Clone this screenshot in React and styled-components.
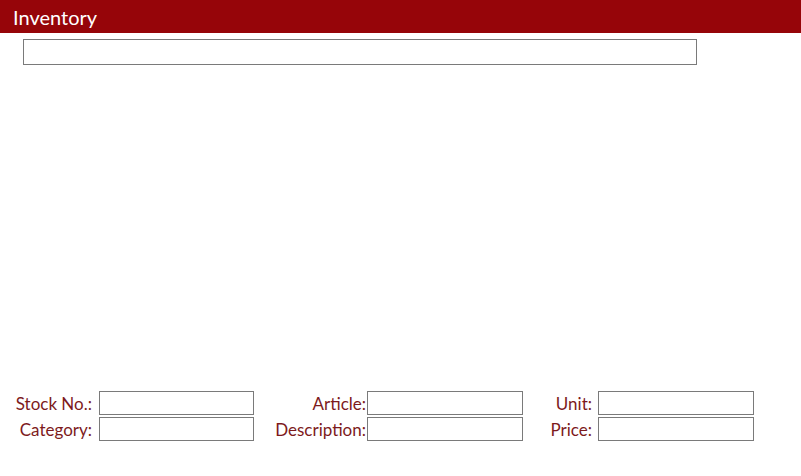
import React from "react";
import styled, { createGlobalStyle } from "styled-components";

const Global = createGlobalStyle`
  html, body { margin: 0; padding: 0; background: #ffffff; }
  body { font-family: Lato, "Open Sans", sans-serif; }
`;

const Page = styled.div`
  height: 476px;
  display: flex;
  flex-direction: column;
`;

const Header = styled.header`
  height: 33px;
  background: #960509;
  color: #ffffff;
  display: flex;
  align-items: center;
  padding-left: 13px;
  font-size: 20px;
  line-height: 1;
  box-sizing: border-box;
  padding-top: 1px;
`;

const SearchRow = styled.div`
  padding: 6px 0 0 23px;
`;

const TextBox = styled.input`
  box-sizing: border-box;
  display: block;
  width: ${(p) => p.$w || 155}px;
  height: ${(p) => p.$h || 24}px;
  border: 1px solid #7a7a7a;
  background: #ffffff;
  margin: 0;
  padding: 0 3px;
  font-family: inherit;
  font-size: 14px;
  outline: none;
`;

const Form = styled.div`
  margin-top: auto;
  padding-bottom: 35px;
  display: grid;
  grid-template-columns: 99px 155px 113px 156px 75px 156px;
  grid-auto-rows: 24px;
  row-gap: 2px;
`;

const Label = styled.label`
  color: #7d1a1c;
  font-size: 17px;
  text-align: right;
  padding-right: ${(p) => p.$pad}px;
  display: flex;
  align-items: center;
  justify-content: flex-end;
  white-space: nowrap;
  line-height: 1;
  padding-top: 0;
  box-sizing: border-box;
`;

const rows = [
  [
    ["Stock No.:", 7, 155],
    ["Article:", 1, 156],
    ["Unit:", 6, 156],
  ],
  [
    ["Category:", 7, 155],
    ["Description:", 1, 156],
    ["Price:", 6, 156],
  ],
];

export default function App() {
  return (
    <>
      <Global />
      <Page>
        <Header>Inventory</Header>
        <SearchRow>
          <TextBox $w={674} $h={26} />
        </SearchRow>
        <Form>
          {rows.map((row, ri) =>
            row.map(([text, pad, w], ci) => (
              <React.Fragment key={`${ri}-${ci}`}>
                <Label $pad={pad}>{text}</Label>
                <TextBox $w={w} />
              </React.Fragment>
            ))
          )}
        </Form>
      </Page>
    </>
  );
}
